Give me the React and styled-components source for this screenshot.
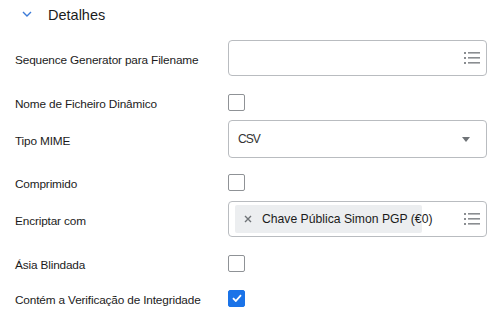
import React from 'react'
import styled, { createGlobalStyle } from 'styled-components'

const GlobalStyle = createGlobalStyle`
body {
  margin: 0;
  background: #ffffff;
  font-family: "Liberation Sans", Arial, sans-serif;
  color: #1b1b1b;
}
`

function ListIcon() {
    return (
        <svg width="16" height="12" viewBox="0 0 16 12">
            <g fill="#8a8d91">
                <rect x="0" y="0" width="2" height="2" />
                <rect x="0" y="5" width="2" height="2" />
                <rect x="0" y="10" width="2" height="2" />
                <rect x="4" y="0" width="12" height="1.6" />
                <rect x="4" y="5" width="12" height="1.6" />
                <rect x="4" y="10" width="12" height="1.6" />
            </g>
        </svg>
    )
}

function Chevron() {
    return (
        <svg width="10" height="6" viewBox="0 0 10 6">
            <path d="M1 1 L5 5 L9 1" fill="none" stroke="#3d7bd8" strokeWidth="1.4" />
        </svg>
    )
}

function Caret() {
    return (
        <svg width="8" height="5" viewBox="0 0 8 5">
            <path d="M0 0 L8 0 L4 5 Z" fill="#6f7377" />
        </svg>
    )
}

function Check() {
    return (
        <svg width="10" height="8" viewBox="0 0 10 8">
            <path d="M1 4.2 L3.8 7 L9 1.2" fill="none" stroke="#ffffff" strokeWidth="1.8" />
        </svg>
    )
}

function Cross() {
    return (
        <CrossSvg width="8" height="8" viewBox="0 0 8 8">
            <path d="M1 1 L7 7 M7 1 L1 7" fill="none" stroke="#6f7377" strokeWidth="1.4" />
        </CrossSvg>
    )
}

function Row({ label, children, top }) {
    return (
        <FieldRow top={top}>
            <Label>{label}</Label>
            <Control>{children}</Control>
        </FieldRow>
    )
}

export default function App() {
    return (
        <Page>
            <GlobalStyle />
            <Header>
                <Chevron />
                <Title>Detalhes</Title>
            </Header>
            <Rows>
                <Row label="Sequence Generator para Filename" top={12}>
                    <Box>
                        <Spacer />
                        <ListIcon />
                    </Box>
                </Row>
                <Row label="Nome de Ficheiro Dinâmico" top={8}>
                    <CheckBox />
                </Row>
                <Row label="Tipo MIME" top={1}>
                    <Box tall>
                        <Value>CSV</Value>
                        <Caret />
                    </Box>
                </Row>
                <Row label="Comprimido" top={7}>
                    <CheckBox />
                </Row>
                <Row label="Encriptar com" top={1}>
                    <Box>
                        <Chip>
                            <Cross />
                            <ChipText>Chave Pública Simon PGP (€0)</ChipText>
                        </Chip>
                        <Spacer />
                        <ListIcon />
                    </Box>
                </Row>
                <Row label="Ásia Blindada" top={8}>
                    <CheckBox />
                </Row>
                <Row label="Contém a Verificação de Integridade" top={-1}>
                    <CheckBox checked>
                        <Check />
                    </CheckBox>
                </Row>
            </Rows>
        </Page>
    )
}

const Page = styled.div`
width: 503px;
height: 319px;
overflow: hidden;
`

const Header = styled.div`
display: flex;
align-items: center;
height: 28px;
padding-left: 22px;
gap: 16px;
`

const Title = styled.span`
font-size: 14.5px;
color: #1b1b1b;
padding-top: 2px;
`

const Rows = styled.div`
display: flex;
flex-direction: column;
`

const FieldRow = styled.div`
display: flex;
align-items: center;
height: 36px;
margin-top: ${p => p.top}px;
padding-left: 15px;
`

const Label = styled.div`
width: 213px;
padding-top: 4px;
font-size: 11.8px;
letter-spacing: -0.15px;
color: #1b1b1b;
white-space: nowrap;
`

const Control = styled.div`
width: 259px;
display: flex;
align-items: center;
`

const Box = styled.div`
box-sizing: border-box;
flex-shrink: 0;
width: 259px;
height: ${p => p.tall ? 38 : 36}px;
border: 1px solid #b9bcc0;
border-radius: 4px;
display: flex;
align-items: center;
padding: 0 ${p => p.tall ? 16 : 6}px 0 6px;
`

const Spacer = styled.div`
flex: 1;
`

const Value = styled.span`
flex: 1;
font-size: 12px;
letter-spacing: -0.9px;
color: #333;
padding-left: 3px;
`

const CheckBox = styled.div`
box-sizing: border-box;
width: 17px;
height: 17px;
border-radius: 2px;
border: 1px solid ${p => p.checked ? '#1a73e8' : '#8f9296'};
background: ${p => p.checked ? '#1a73e8' : '#fff'};
display: flex;
align-items: center;
justify-content: center;
`

const Chip = styled.div`
flex-shrink: 0;
width: 187px;
height: 28px;
background: #eceef0;
border-radius: 2px;
display: flex;
align-items: center;
gap: 10px;
padding-left: 9px;
box-sizing: border-box;
white-space: nowrap;
`

const CrossSvg = styled.svg`
flex-shrink: 0;
`

const ChipText = styled.span`
flex-shrink: 0;
font-size: 12.2px;
color: #1b1b1b;
`
